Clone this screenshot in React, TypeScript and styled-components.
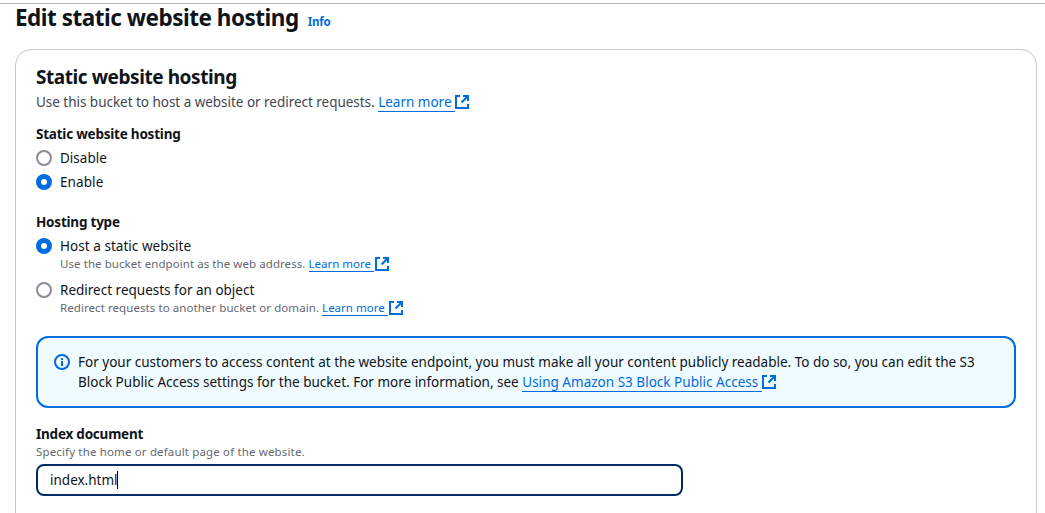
import React from "react";
import styled, { createGlobalStyle } from "styled-components";

const GlobalStyle = createGlobalStyle`
  * { box-sizing: border-box; }
  html, body { margin: 0; height: 100%; overflow: hidden; background: #fff; }
  body {
    font-family: "Noto Sans", "Open Sans", sans-serif;
    font-size: 13.5px;
    line-height: 20px;
    color: #0f141a;
  }
`;

const Page = styled.main`
  height: 513px;
  padding-top: 3px;
  overflow: hidden;
`;
const TopRule = styled.div`
  height: 1px;
  background: #b4b4bb;
`;
const PageHeader = styled.header`
  display: flex;
  align-items: baseline;
  gap: 9px;
  height: 45px;
  padding-left: 15px;
`;
const PageTitle = styled.h1`
  margin: -1px 0 0;
  font-size: 22.5px;
  line-height: 30px;
  font-weight: 700;
  letter-spacing: -0.49px;
  white-space: nowrap;
`;
const InfoLink = styled.a`
  color: #006ce0;
  font-size: 11.5px;
  font-weight: 700;
  letter-spacing: -0.2px;
`;
const Panel = styled.section`
  width: 1022px;
  height: 520px;
  margin-left: 15px;
  padding: 15px 20px 0;
  border: 1px solid #c6c6cd;
  border-radius: 16px;
`;
const PanelTitle = styled.h2`
  margin: 0;
  font-size: 19px;
  line-height: 24px;
  font-weight: 700;
  letter-spacing: -0.43px;
`;
const Text = styled.span<{ $spacing?: number }>`
  letter-spacing: ${(p) => p.$spacing ?? 0}px;
  white-space: nowrap;
`;
const PanelDescription = styled.p`
  margin: 3px 0 12px;
  color: #424650;
  white-space: nowrap;
`;
const Link = styled.a<{ $spacing?: number }>`
  color: #006ce0;
  border-bottom: 1px solid #006ce0;
  letter-spacing: ${(p) => p.$spacing ?? 0}px;
  white-space: pre;
`;
const LinkIcon = styled.svg<{ $small?: boolean }>`
  width: 16px;
  height: 16px;
  margin-left: ${(p) => (p.$small ? 0 : -1)}px;
  vertical-align: ${(p) => (p.$small ? -4 : -3)}px;
`;
const Group = styled.div`
  margin-bottom: 20px;
`;
const Label = styled.div`
  font-size: 13.5px;
  font-weight: 700;
  letter-spacing: -0.22px;
`;
const Options = styled.div<{ $gap: number }>`
  display: flex;
  flex-direction: column;
  gap: ${(p) => p.$gap}px;
  margin-top: 4px;
`;
const Option = styled.div`
  display: flex;
  gap: 8px;
`;
const Radio = styled.span<{ $checked?: boolean }>`
  width: 16px;
  height: 16px;
  margin-top: 2px;
  border-radius: 50%;
  background: #fff;
  border: ${(p) => (p.$checked ? "5px solid #006ce0" : "2px solid #8c8c94")};
`;
const OptionBody = styled.div``;
const Hint = styled.div`
  height: 16px;
  font-size: 11.5px;
  line-height: 15px;
  color: #656871;
  white-space: nowrap;
`;
const Alert = styled.div`
  display: flex;
  gap: 8px;
  height: 72px;
  padding: 14px 16px;
  border: 2px solid #006ce0;
  border-radius: 12px;
  background: #f0fbff;
`;
const InfoIcon = styled.svg`
  width: 16px;
  height: 16px;
  margin-top: 2px;
  flex: none;
`;
const AlertLine = styled.div`
  height: 20px;
  white-space: nowrap;
`;
const Field = styled.div`
  margin-top: 16px;
`;
const Input = styled.div`
  display: flex;
  align-items: center;
  width: 647px;
  height: 32px;
  margin-top: 4px;
  padding-left: 12px;
  border: 2px solid #002b66;
  border-radius: 8px;
`;
const Caret = styled.span`
  width: 1px;
  height: 18px;
  margin-left: -1px;
  background: #000;
`;

function External({ small }: { small?: boolean }) {
  return (
    <LinkIcon $small={small} viewBox="0 0 16 16" fill="none" stroke="#006ce0" strokeWidth="2">
      <path d="M6 2H2v12h12v-4" />
      <path d="M9 2h5v5" />
      <path d="M14 2 7.5 8.5" strokeWidth="2.2" />
    </LinkIcon>
  );
}

export default function App() {
  return (
    <>
      <GlobalStyle />
      <Page>
        <TopRule />
        <PageHeader>
          <PageTitle>Edit static website hosting</PageTitle>
          <InfoLink>Info</InfoLink>
        </PageHeader>
        <Panel>
          <PanelTitle>Static website hosting</PanelTitle>
          <PanelDescription>
            <Text $spacing={-0.03}>Use this bucket to host a website or redirect requests. </Text>
            <Link>{"Learn more "}</Link>
            <External />
          </PanelDescription>
          <Group>
            <Label>Static website hosting</Label>
            <Options $gap={4}>
              <Option><Radio /><Text>Disable</Text></Option>
              <Option><Radio $checked /><Text $spacing={0.1}>Enable</Text></Option>
            </Options>
          </Group>
          <Group>
            <Label>Hosting type</Label>
            <Options $gap={8}>
              <Option>
                <Radio $checked />
                <OptionBody>
                  <Text $spacing={0.04}>Host a static website</Text>
                  <Hint>
                    <Text $spacing={0.07}>Use the bucket endpoint as the web address. </Text>
                    <Link>{"Learn more "}</Link>
                    <External small />
                  </Hint>
                </OptionBody>
              </Option>
              <Option>
                <Radio />
                <OptionBody>
                  <Text>Redirect requests for an object</Text>
                  <Hint>
                    <Text $spacing={0.07}>Redirect requests to another bucket or domain. </Text>
                    <Link>{"Learn more "}</Link>
                    <External small />
                  </Hint>
                </OptionBody>
              </Option>
            </Options>
          </Group>
          <Alert>
            <InfoIcon viewBox="0 0 16 16" fill="none" stroke="#006ce0" strokeWidth="2">
              <circle cx="8" cy="8" r="7" />
              <path d="M8 4v2M8 7v5" />
            </InfoIcon>
            <div>
              <AlertLine>
                <Text>For your customers to access content at the website endpoint, you must make all your content publicly readable. To do so, you can edit the S3</Text>
              </AlertLine>
              <AlertLine>
                <Text>Block Public Access settings for the bucket. For more information, see </Text>
                <Link $spacing={0.02}>{"Using Amazon S3 Block Public Access "}</Link>
                <External />
              </AlertLine>
            </div>
          </Alert>
          <Field>
            <Label>Index document</Label>
            <Hint><Text $spacing={0.15}>Specify the home or default page of the website.</Text></Hint>
            <Input><Text>index.html</Text><Caret /></Input>
          </Field>
        </Panel>
      </Page>
    </>
  );
}
